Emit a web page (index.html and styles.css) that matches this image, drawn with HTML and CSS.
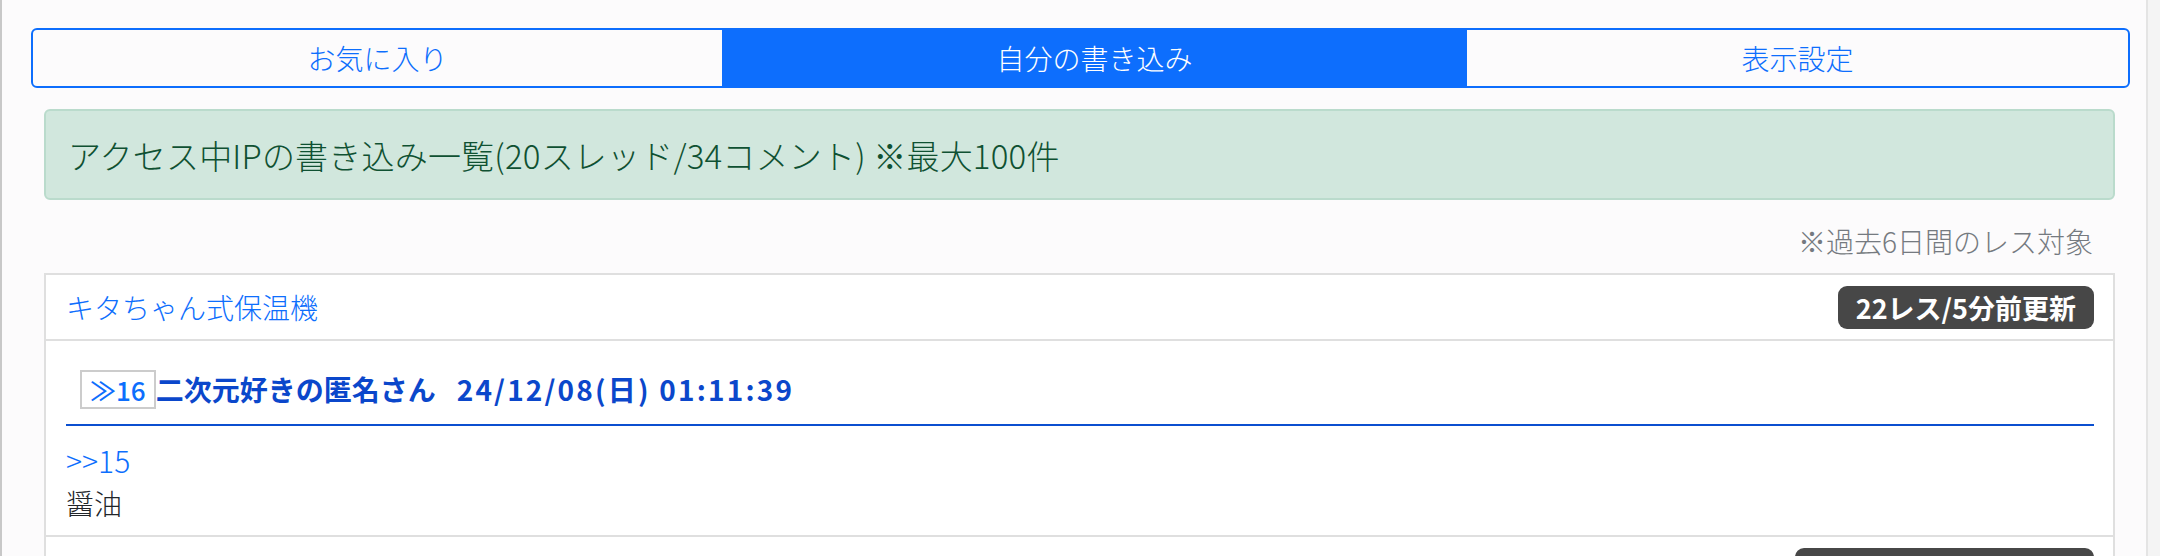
FILE: index.html
```html
<!DOCTYPE html>
<html lang="ja">
<head>
<meta charset="utf-8">
<title>自分の書き込み</title>
<link rel="stylesheet" href="styles.css">
</head>
<body>
<div class="page">
  <nav class="tabs">
    <a class="tab">お気に入り</a>
    <a class="tab active">自分の書き込み</a>
    <a class="tab">表示設定</a>
  </nav>
  <div class="alert">アクセス中IPの書き込み一覧(20スレッド/34コメント) ※最大100件</div>
  <p class="note">※過去6日間のレス対象</p>
  <div class="card">
    <div class="thread-head">
      <a class="thread-title">キタちゃん式保温機</a>
      <span class="badge">22レス/5分前更新</span>
    </div>
    <div class="post">
      <div class="post-head">
        <span class="resno">≫16</span>
        <span class="meta">二次元好きの匿名さん<span class="date">24/12/08(日) 01:11:39</span></span>
      </div>
      <div class="post-body">
        <a class="anchor">&gt;&gt;15</a>
        <div class="text">醤油</div>
      </div>
    </div>
    <div class="thread-head">
      <a class="thread-title">がんばれ！キタちゃん応援スレ(全角) 30件以上の書き込み</a>
      <span class="badge">31レス/12時間前更新</span>
    </div>
  </div>
</div>
</body>
</html>
```
FILE: styles.css
```css
html, body {
  margin: 0;
  padding: 0;
}
body {
  background: #f4f4f4;
  font-family: "Noto Sans CJK JP", "Noto Sans", sans-serif;
  font-weight: 300;
  height: 556px;
  overflow: hidden;
}
.page {
  width: 2144px;
  min-height: 556px;
  background: #fcfbfc;
  border-left: 2px solid #c8c8c8;
  border-right: 2px solid #e4e4e4;
  padding-top: 28px;
}
.tabs {
  display: flex;
  height: 60px;
  box-sizing: border-box;
  margin: 0 16px 0 29px;
  border: 2px solid #0d6efd;
  border-radius: 6px;
  overflow: hidden;
}
.tab {
  flex: 1 1 auto;
  display: flex;
  align-items: center;
  justify-content: center;
  font-size: 28px;
  color: #0d6efd;
  text-decoration: none;
}
.tab.active {
  background: #0d6efd;
  color: #fff;
}
.alert {
  margin: 21px 31px 0 42px;
  height: 91px;
  box-sizing: border-box;
  display: flex;
  align-items: center;
  padding: 0 22px;
  background: #d1e7dd;
  border: 2px solid #badbcc;
  border-radius: 6px;
  color: #0f5132;
  font-size: 33px;
  letter-spacing: 0.2px;
}
.note {
  margin: 19px 53px 9px 0;
  text-align: right;
  font-size: 28px;
  line-height: 45px;
  color: #757a80;
}
.card {
  margin: 0 31px 0 42px;
  background: #fff;
  border: 2px solid #dfdfdf;
}
.thread-head {
  display: flex;
  align-items: center;
  justify-content: space-between;
  height: 64px;
  padding: 0 19px 0 20px;
  border-bottom: 2px solid #dfdfdf;
}
.thread-title {
  font-size: 28px;
  color: #0d6efd;
}
.badge {
  background: #474747;
  color: #fff;
  font-weight: 700;
  font-size: 27px;
  line-height: 1;
  padding: 8px 18px;
  border-radius: 9px;
}
.post {
  padding: 0 19px 0 20px;
  border-bottom: 2px solid #dfdfdf;
}
.post-head {
  display: flex;
  align-items: center;
  padding: 28px 0 15px;
  border-bottom: 2px solid #0b4fd0;
}
.resno {
  display: flex;
  align-items: center;
  height: 39px;
  box-sizing: border-box;
  margin-left: 14px;
  padding: 0 8px;
  border: 2px solid #cccccc;
  font-size: 26px;
  font-weight: 500;
  color: #0d6efd;
}
.meta {
  font-size: 28px;
  font-weight: 700;
  color: #0b47cb;
}
.date {
  margin-left: 21px;
  letter-spacing: 2.2px;
}
.post-body {
  padding: 13px 0 11px;
  font-size: 28px;
  line-height: 42px;
}
.anchor {
  color: #0d6efd;
  font-size: 30px;
}
.text {
  color: #212529;
}
```
